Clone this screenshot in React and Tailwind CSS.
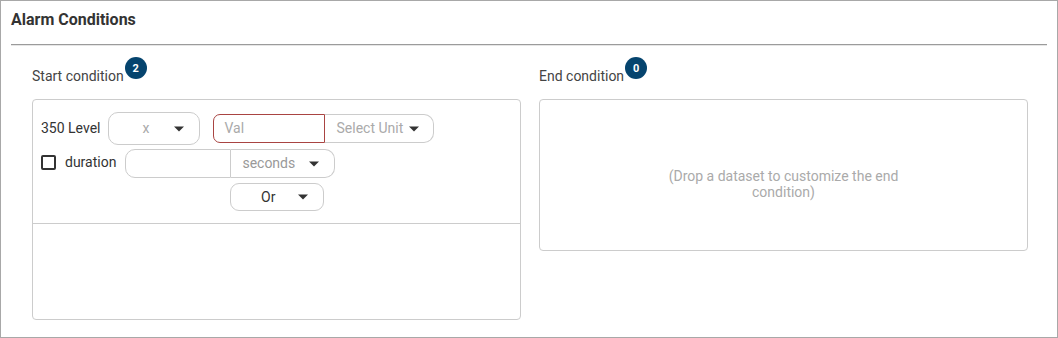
import React from 'react';

function Caret({ className = '' }) {
    return (
        <svg width="10" height="6" viewBox="0 0 10 6" className={className}>
            <path d="M0 0.5 L10 0.5 L5 5.5 Z" fill="#333" />
        </svg>
    );
}

function Badge({ count }) {
    return (
        <span className="ml-px -mt-[9px] flex h-[22px] w-[22px] items-center justify-center rounded-full bg-[#05446e] text-[11px] font-bold leading-none text-white">
            {count}
        </span>
    );
}

export default function App() {
    return (
        <div className="h-[338px] w-[1058px] border border-[#a8a8a8] bg-white font-['Roboto',sans-serif] text-[#333]">
            <div className="mx-[10px] border-b border-[#9b9b9b] pb-[12px] pt-[7px] shadow-[0_1px_0_#e6e6e6]">
                <h1 className="text-[16px] font-bold leading-[24px] text-[#333]">Alarm Conditions</h1>
            </div>

            <div className="mt-[21px] flex gap-[18px] pl-[31px]">
                {/* start condition */}
                <div className="w-[489px]">
                    <div className="flex items-start">
                        <span className="text-[14px] leading-[20px] text-[#444]">Start condition</span>
                        <Badge count={2} />
                    </div>
                    <div className="mt-[13px] h-[221px] rounded-[4px] border border-[#cccccc]">
                        <div className="border-b border-[#cccccc] pb-[12px] pl-[8px] pt-[12px]">
                            <div className="flex h-[33px] items-center">
                                <span className="text-[14px] text-[#333]">350 Level</span>
                                <div className="ml-[8px] flex h-[33px] w-[92px] items-center rounded-[10px] border border-[#cccccc] pl-[33px] pr-[15px]">
                                    <span className="text-[14px] text-[#aaaaaa]">x</span>
                                    <Caret className="ml-auto" />
                                </div>
                                <div className="ml-[13px] flex h-[29px] w-[112px] items-center rounded-l-[7px] border border-[#a94442] pl-[10px]">
                                    <span className="text-[14px] text-[#aaaaaa]">Val</span>
                                </div>
                                <div className="flex h-[29px] w-[109px] items-center rounded-r-[10px] border border-l-0 border-[#cccccc] pl-[11px] pr-[14px]">
                                    <span className="text-[14px] text-[#aaaaaa]">Select Unit</span>
                                    <Caret className="ml-auto" />
                                </div>
                            </div>

                            <div className="mt-[4px] flex h-[29px] items-center">
                                <div className="-mt-[3px] flex items-center">
                                    <span className="h-[15px] w-[15px] rounded-[2px] border-2 border-[#333]" />
                                    <span className="ml-[9px] text-[14px] text-[#333]">duration</span>
                                </div>
                                <div className="ml-[9px] h-[29px] w-[106px] rounded-l-[10px] border border-[#cccccc]" />
                                <div className="flex h-[29px] w-[104px] items-center rounded-r-[10px] border border-l-0 border-[#cccccc] pl-[11px] pr-[15px]">
                                    <span className="text-[14px] text-[#999999]">seconds</span>
                                    <Caret className="ml-auto" />
                                </div>
                            </div>

                            <div className="ml-[189px] mt-[5px] flex h-[28px] w-[94px] items-center rounded-[9px] border border-[#cccccc] pl-[30px] pr-[15px]">
                                <span className="text-[14px] text-[#333]">Or</span>
                                <Caret className="ml-auto" />
                            </div>
                        </div>
                    </div>
                </div>

                {/* end condition */}
                <div className="w-[489px]">
                    <div className="flex items-start">
                        <span className="text-[14px] leading-[20px] text-[#444]">End condition</span>
                        <Badge count={0} />
                    </div>
                    <div className="mt-[13px] flex h-[152px] items-center justify-center rounded-[4px] border border-[#cccccc] pt-[18px]">
                        <p className="w-[250px] text-center text-[14px] leading-[16px] text-[#aaaaaa]">
                            (Drop a dataset to customize the end condition)
                        </p>
                    </div>
                </div>
            </div>
        </div>
    );
}
